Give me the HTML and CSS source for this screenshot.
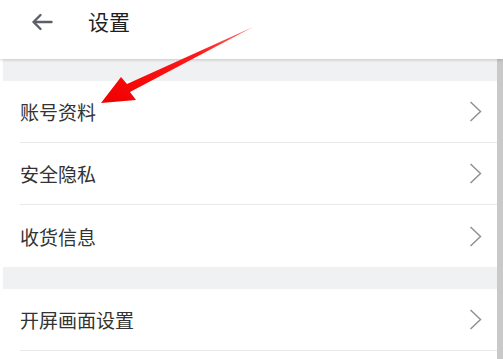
FILE: index.html
```html
<!DOCTYPE html>
<html lang="zh">
<head>
<meta charset="utf-8">
<title>设置</title>
<link rel="stylesheet" href="styles.css">
</head>
<body>
<div class="header">
  <svg class="back" width="22" height="18" viewBox="0 0 22 18">
    <path d="M20.5 9H2.5M9.5 2L2.5 9L9.5 16" fill="none" stroke="#5b6068" stroke-width="2.4" stroke-linecap="round" stroke-linejoin="round"/>
  </svg>
  <span class="title">设置</span>
</div>
<div class="main">
  <div class="list">
    <div class="gap"></div>
    <div class="row"><div class="row-inner"><span>账号资料</span><svg class="chev" width="13" height="21" viewBox="0 0 13 21"><polyline points="1.5,1 11.5,10.5 1.5,20" fill="none" stroke="#8e9196" stroke-width="1.5"/></svg></div></div>
    <div class="row"><div class="row-inner"><span>安全隐私</span><svg class="chev" width="13" height="21" viewBox="0 0 13 21"><polyline points="1.5,1 11.5,10.5 1.5,20" fill="none" stroke="#8e9196" stroke-width="1.5"/></svg></div></div>
    <div class="row last"><div class="row-inner"><span>收货信息</span><svg class="chev" width="13" height="21" viewBox="0 0 13 21"><polyline points="1.5,1 11.5,10.5 1.5,20" fill="none" stroke="#8e9196" stroke-width="1.5"/></svg></div></div>
    <div class="gap"></div>
    <div class="row"><div class="row-inner"><span>开屏画面设置</span><svg class="chev" width="13" height="21" viewBox="0 0 13 21"><polyline points="1.5,1 11.5,10.5 1.5,20" fill="none" stroke="#8e9196" stroke-width="1.5"/></svg></div></div>
  </div>
  <div class="scrollbar"></div>
</div>
<svg class="pointer" width="503" height="359" viewBox="0 0 503 359">
  <defs>
    <linearGradient id="red" x1="1" y1="0" x2="0" y2="1">
      <stop offset="0" stop-color="#ff7070"/>
      <stop offset="0.35" stop-color="#ff1a1a"/>
      <stop offset="1" stop-color="#f00000"/>
    </linearGradient>
  </defs>
  <polygon points="253,27 127,84 121,77 101,103 136,100 130,92" fill="url(#red)"/>
</svg>
</body>
</html>
```

FILE: styles.css
```css
body {
    margin: 0;
    width: 503px;
    height: 359px;
    overflow: hidden;
    background: #fff;
    font-family: "Noto Sans CJK SC", "Noto Sans", sans-serif;
    position: relative;
}
.header {
    height: 59px;
    box-sizing: border-box;
    padding-top: 6px;
    display: flex;
    align-items: flex-start;
    background: #fff;
    box-shadow: 0 1px 3px rgba(0, 0, 0, 0.18);
    position: relative;
    z-index: 1;
}
.back {
    margin-left: 31px;
    margin-top: 7px;
}
.title {
    margin-left: 35px;
    font-size: 21px;
    line-height: 30px;
    color: #1f1f1f;
}
.main {
    display: flex;
}
.list {
    flex: 1;
    margin-left: 3px;
}
.gap {
    height: 22px;
    background: #f0f1f3;
}
.row {
    padding-left: 17px;
    background: #fff;
}
.row-inner {
    height: 62px;
    box-sizing: border-box;
    border-bottom: 1px solid #e9e9e9;
    display: flex;
    align-items: center;
    justify-content: space-between;
    padding-right: 15px;
    font-size: 19px;
    color: #333;
}
.row.last .row-inner {
    border-bottom: none;
}
.scrollbar {
    width: 6px;
    height: 300px;
    background: #c9c9c9;
}
.pointer {
    position: absolute;
    left: 0;
    top: 0;
    z-index: 2;
}
```
